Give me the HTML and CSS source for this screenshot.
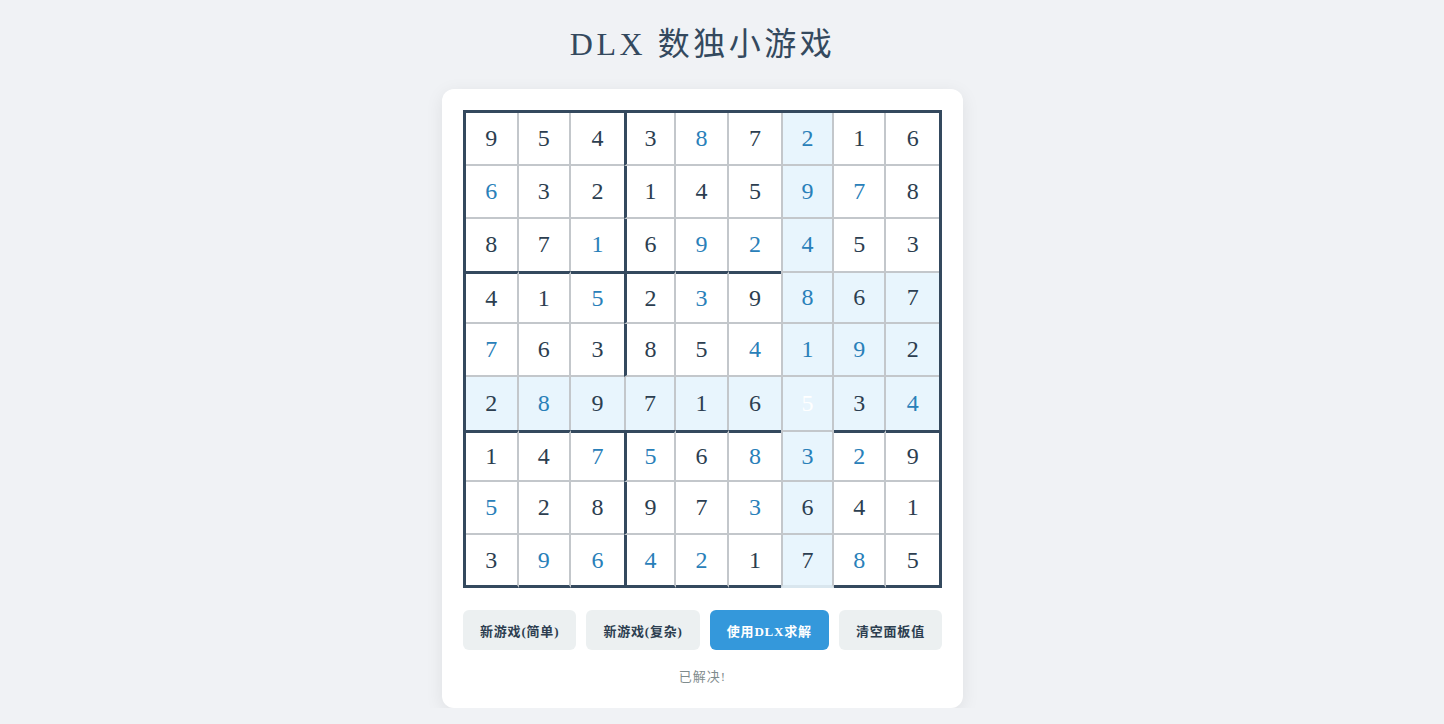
FILE: index.html
```html
<!DOCTYPE html>
<html lang="zh">
<head>
<meta charset="utf-8">
<title>DLX 数独小游戏</title>
<link rel="stylesheet" href="styles.css">
</head>
<body>
<div class="page">
  <h1 class="title">DLX 数独小游戏</h1>
  <div class="card">
    <div class="board">
      <div class="c">9</div><div class="c">5</div><div class="c">4</div><div class="c">3</div><div class="c b">8</div><div class="c">7</div><div class="c b hl">2</div><div class="c">1</div><div class="c">6</div>
      <div class="c b">6</div><div class="c">3</div><div class="c">2</div><div class="c">1</div><div class="c">4</div><div class="c">5</div><div class="c b hl">9</div><div class="c b">7</div><div class="c">8</div>
      <div class="c">8</div><div class="c">7</div><div class="c b">1</div><div class="c">6</div><div class="c b">9</div><div class="c b">2</div><div class="c b hl">4</div><div class="c">5</div><div class="c">3</div>
      <div class="c">4</div><div class="c">1</div><div class="c b">5</div><div class="c">2</div><div class="c b">3</div><div class="c">9</div><div class="c b hl">8</div><div class="c hl">6</div><div class="c hl">7</div>
      <div class="c b">7</div><div class="c">6</div><div class="c">3</div><div class="c">8</div><div class="c">5</div><div class="c b">4</div><div class="c b hl">1</div><div class="c b hl">9</div><div class="c hl">2</div>
      <div class="c hl">2</div><div class="c b hl">8</div><div class="c hl">9</div><div class="c hl">7</div><div class="c hl">1</div><div class="c hl">6</div><div class="c hl sel">5</div><div class="c hl">3</div><div class="c b hl">4</div>
      <div class="c">1</div><div class="c">4</div><div class="c b">7</div><div class="c b">5</div><div class="c">6</div><div class="c b">8</div><div class="c b hl">3</div><div class="c b">2</div><div class="c">9</div>
      <div class="c b">5</div><div class="c">2</div><div class="c">8</div><div class="c">9</div><div class="c">7</div><div class="c b">3</div><div class="c hl">6</div><div class="c">4</div><div class="c">1</div>
      <div class="c">3</div><div class="c b">9</div><div class="c b">6</div><div class="c b">4</div><div class="c b">2</div><div class="c">1</div><div class="c hl">7</div><div class="c b">8</div><div class="c">5</div>
    </div>
    <div class="actions">
      <button class="btn">新游戏(简单)</button>
      <button class="btn">新游戏(复杂)</button>
      <button class="btn primary">使用DLX求解</button>
      <button class="btn">清空面板值</button>
    </div>
    <div class="status">已解决!</div>
  </div>
</div>
</body>
</html>
```

FILE: styles.css
```css
html, body {
  margin: 0;
  padding: 0;
}
body {
  background: #f0f2f5;
  font-family: "Liberation Serif", "Noto Sans CJK SC", serif;
  color: #2c3e50;
}
.page {
  display: flex;
  flex-direction: column;
  align-items: center;
  padding-right: 39px;
}
.title {
  margin: 24px 0 25px;
  font-size: 32px;
  line-height: 40px;
  font-weight: normal;
  letter-spacing: 3.5px;
  color: #34495e;
}
.card {
  background: #fff;
  border-radius: 12px;
  padding: 21px 21px 21px;
  box-shadow: 0 4px 18px rgba(0, 0, 0, 0.08);
  width: 479px;
}
.board {
  display: grid;
  grid-template-columns: repeat(9, 1fr);
  grid-template-rows: repeat(9, 1fr);
  width: 479px;
  height: 478px;
  box-sizing: border-box;
  border: 3px solid #34495e;
  border-bottom: none;
}
.c {
  box-sizing: border-box;
  display: flex;
  align-items: center;
  justify-content: center;
  background: #fff;
  font-size: 24px;
  color: #2c3e50;
  border-right: 2px solid #c3c7cb;
  border-bottom: 2px solid #c3c7cb;
}
.c.b {
  color: #2980b9;
}
.c:nth-child(9n),
.c:nth-child(9n+3),
.c:nth-child(9n+6) {
  border-right: none;
}
.c:nth-child(9n+4),
.c:nth-child(9n+7) {
  border-left: 3px solid #34495e;
}
.c:nth-child(n+19):nth-child(-n+27),
.c:nth-child(n+46):nth-child(-n+54) {
  border-bottom: none;
}
.c:nth-child(n+28):nth-child(-n+36),
.c:nth-child(n+55):nth-child(-n+63) {
  border-top: 3px solid #34495e;
}
.c:nth-child(n+73) {
  border-bottom: 3px solid #34495e;
}
.board .c.hl {
  background: #e8f5fd;
  border-color: #c3c7cb;
}
.board .c.hl:nth-child(9n+4),
.board .c.hl:nth-child(9n+7) {
  border-left-width: 2px;
}
.board .c.hl:nth-child(n+28):nth-child(-n+36),
.board .c.hl:nth-child(n+55):nth-child(-n+63) {
  border-top-width: 2px;
}
.board .c.hl:nth-child(n+73) {
  border-bottom-color: #d9e6ee;
}
.c.sel {
  color: #ffffff;
}
.actions {
  display: flex;
  justify-content: space-between;
  margin-top: 22px;
}
.btn {
  height: 40px;
  padding: 0 17px;
  border: none;
  border-radius: 6px;
  background: #ecf0f1;
  color: #2c3e50;
  font-family: "Liberation Serif", "Noto Sans CJK SC", serif;
  font-size: 13px;
  font-weight: bold;
  letter-spacing: 0.8px;
}
.btn.primary {
  background: #3498db;
  color: #fff;
}
.status {
  margin-top: 17px;
  line-height: 20px;
  text-align: center;
  font-size: 13px;
  letter-spacing: 1px;
  color: #7f8c8d;
}
```
